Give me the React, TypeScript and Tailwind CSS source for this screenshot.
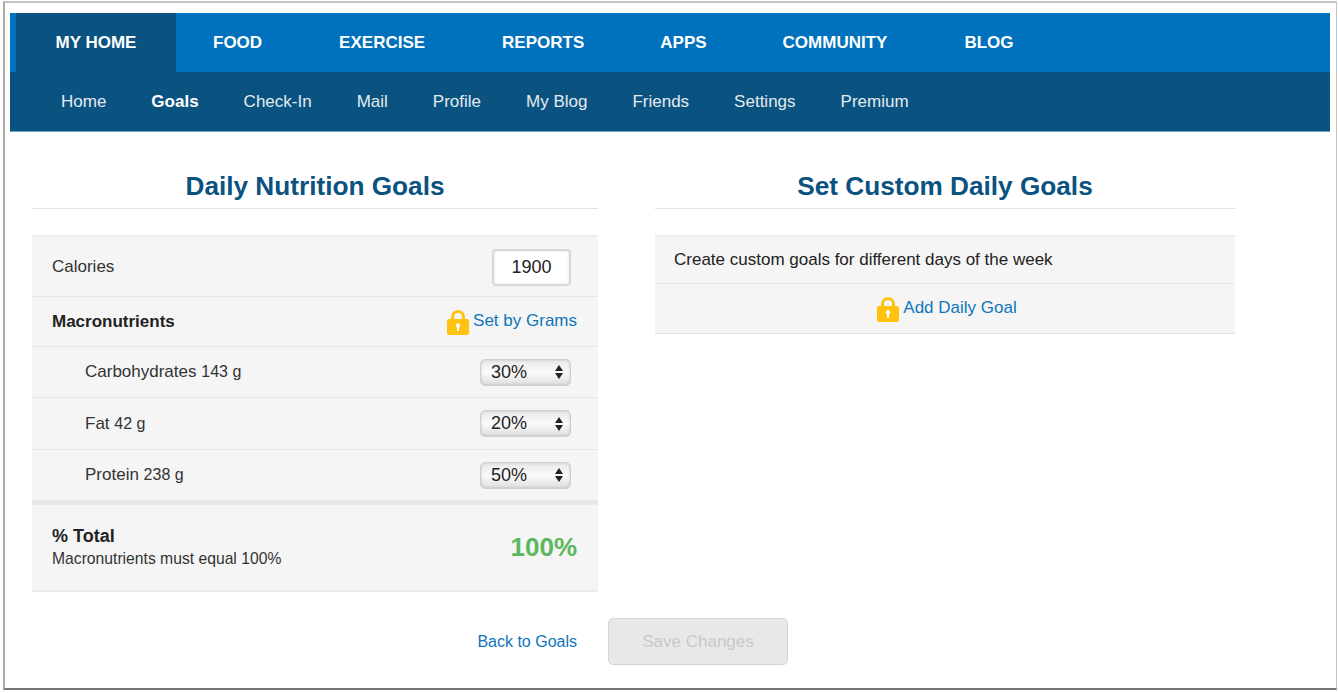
import React from "react";

const mainTabs = [
  { label: "MY HOME", cls: "w-[160px] justify-center bg-[#0a5280]" },
  { label: "FOOD", cls: "ml-[37px]" },
  { label: "EXERCISE", cls: "ml-[77px]" },
  { label: "REPORTS", cls: "ml-[77px]" },
  { label: "APPS", cls: "ml-[76px]" },
  { label: "COMMUNITY", cls: "ml-[76px]" },
  { label: "BLOG", cls: "ml-[77px]" },
];

const subTabs = ["Home", "Goals", "Check-In", "Mail", "Profile", "My Blog", "Friends", "Settings", "Premium"];

function Lock() {
  return (
    <svg width="22" height="26" viewBox="0 0 22 26" className="shrink-0">
      <path d="M5.5 12V8a5.5 5.5 0 0 1 11 0v4" fill="none" stroke="#ffc20e" strokeWidth="3" />
      <rect x="0" y="10" width="22" height="16" rx="2" fill="#ffc20e" />
      <circle cx="11" cy="16.5" r="2.2" fill="#fff" />
      <rect x="10" y="17" width="2" height="5" fill="#fff" />
    </svg>
  );
}

function PercentSelect({ value }: { value: string }) {
  return (
    <div className="flex h-[27px] w-[91px] items-center justify-between rounded-[5px] border border-[#cfcfcf] bg-gradient-to-b from-[#e9e9e9] via-[#fbfbfb] to-[#dedede] pl-[10px] pr-[6px] text-[18px] text-[#222] shadow-[inset_0_0_3px_rgba(0,0,0,0.18)]">
      <span>{value}</span>
      <svg width="10" height="16" viewBox="0 0 10 16">
        <path d="M5 1l4 6H1zM5 15l4-6H1z" fill="#222" />
      </svg>
    </div>
  );
}

function MacroRow({ name, grams, value, h }: { name: string; grams: string; value: string; h: string }) {
  return (
    <div className={`flex items-center justify-between border-b border-[#e6e6e6] pl-[53px] pr-[27px] ${h}`}>
      <div className="text-[17px] text-[#333]">
        {name} <span className="text-[16px]">{grams}</span>
      </div>
      <PercentSelect value={value} />
    </div>
  );
}

export default function App() {
  return (
    <div className="h-[693px] w-[1338px] overflow-hidden bg-white pl-[3px] pt-[1px] font-['Liberation_Sans',Arial,sans-serif]">
      <div className="h-[689px] w-[1334px] border border-t-2 border-b-2 border-l-2 border-[#c4c4c4] border-b-[#777] border-l-[#aaa] pl-[5px] pt-[10px]">
        <nav className="w-[1320px]">
          <div className="flex h-[59px] items-stretch bg-[#0071bc] pl-[6px] text-[17px] font-bold text-white">
            {mainTabs.map((t) => (
              <div key={t.label} className={`flex items-center ${t.cls}`}>
                {t.label}
              </div>
            ))}
          </div>
          <div className="flex h-[60px] items-center gap-[45px] border-b border-[#7aa3bf] bg-[#0a5280] pl-[51px] text-[17px] text-[#e4ebf0]">
            {subTabs.map((t) => (
              <span key={t} className={t === "Goals" ? "font-bold text-white" : ""}>
                {t}
              </span>
            ))}
          </div>
        </nav>

        <div className="flex pl-[22px] pt-[36px]">
          <section className="w-[566px]">
            <h2 className="h-[41px] border-b border-[#e2e2e2] text-center text-[26.2px] leading-[36px] font-bold text-[#0a5280]">
              Daily Nutrition Goals
            </h2>
            <div className="mt-[26px] border-t-2 border-[#ececec] bg-[#f5f5f5]">
              <div className="flex h-[60px] items-center justify-between border-b border-[#e6e6e6] pl-[20px] pr-[27px]">
                <span className="text-[17px] text-[#333]">Calories</span>
                <div className="mt-[1px] flex h-[37px] w-[79px] items-center justify-center rounded-[4px] border-2 border-[#d8d8d8] bg-white text-[18px] text-[#222] shadow-[inset_0_0_3px_rgba(0,0,0,0.12)]">
                  1900
                </div>
              </div>
              <div className="flex h-[50px] items-center justify-between border-b border-[#e6e6e6] pl-[20px] pr-[21px]">
                <span className="text-[17px] font-bold text-[#222]">Macronutrients</span>
                <div className="flex items-center gap-[4px] text-[17px] text-[#0f75bc]">
                  <Lock />
                  <span className="pb-[2px]">Set by Grams</span>
                </div>
              </div>
              <MacroRow name="Carbohydrates" grams="143 g" value="30%" h="h-[51px]" />
              <MacroRow name="Fat" grams="42 g" value="20%" h="h-[52px]" />
              <MacroRow name="Protein" grams="238 g" value="50%" h="h-[51px]" />
              <div className="flex h-[91px] items-center justify-between border-t-4 border-b-2 border-t-[#e8e8e8] border-b-[#ececec] pl-[20px] pr-[21px]">
                <div>
                  <div className="text-[18px] leading-[22px] font-bold text-[#222]">% Total</div>
                  <div className="text-[15.7px] leading-[24px] text-[#333]">Macronutrients must equal 100%</div>
                </div>
                <span className="text-[26px] font-bold text-[#5cb85c]">100%</span>
              </div>
            </div>
            <div className="mt-[26px] flex items-center justify-end gap-[31px]">
              <span className="text-[16px] text-[#0f75bc]">Back to Goals</span>
              <div className="mr-[-190px] flex h-[47px] w-[180px] items-center justify-center rounded-[5px] border border-[#d4d4d4] bg-[#e8e8e8] text-[17px] text-[#c8c8c8]">
                Save Changes
              </div>
            </div>
          </section>

          <section className="ml-[57px] w-[580px]">
            <h2 className="h-[41px] border-b border-[#e2e2e2] text-center text-[26.2px] leading-[36px] font-bold text-[#0a5280]">
              Set Custom Daily Goals
            </h2>
            <div className="mt-[26px] border-t-2 border-[#ececec] bg-[#f5f5f5]">
              <div className="flex h-[47px] items-center border-b border-[#e6e6e6] pl-[19px] text-[17px] text-[#222]">
                Create custom goals for different days of the week
              </div>
              <div className="flex h-[50px] items-center justify-center gap-[4px] border-b border-[#e6e6e6] pl-[4px] text-[17px] text-[#0f75bc]">
                <Lock />
                <span className="pb-[2px]">Add Daily Goal</span>
              </div>
            </div>
          </section>
        </div>
      </div>
    </div>
  );
}
